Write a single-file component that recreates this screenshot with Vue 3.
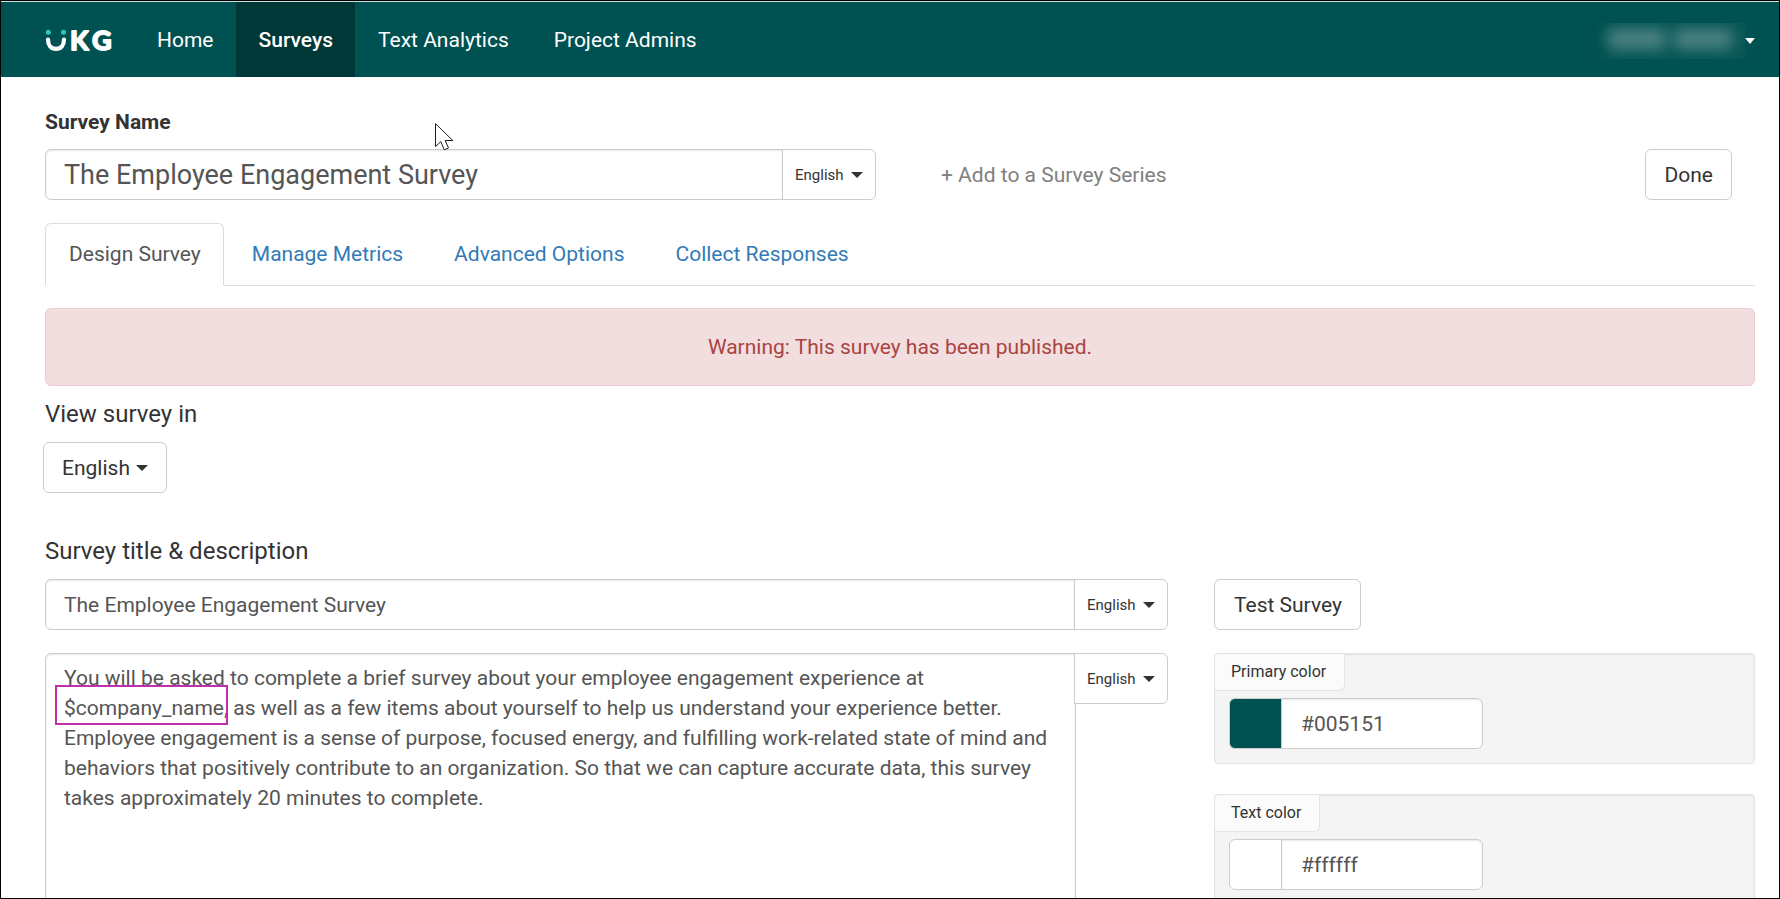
<script setup>
import { ref } from 'vue'

const navItems = [
  { label: 'Home', active: false },
  { label: 'Surveys', active: true },
  { label: 'Text Analytics', active: false },
  { label: 'Project Admins', active: false },
]

const tabs = [
  { label: 'Design Survey', active: true },
  { label: 'Manage Metrics', active: false },
  { label: 'Advanced Options', active: false },
  { label: 'Collect Responses', active: false },
]

const surveyName = ref('The Employee Engagement Survey')
const surveyTitle = ref('The Employee Engagement Survey')
const description = ref(
  'You will be asked to complete a brief survey about your employee engagement experience at $company_name, as well as a few items about yourself to help us understand your experience better. Employee engagement is a sense of purpose, focused energy, and fulfilling work-related state of mind and behaviors that positively contribute to an organization. So that we can capture accurate data, this survey takes approximately 20 minutes to complete.'
)

const colors = ref([
  { id: 'primary-color', label: 'Primary color', value: '#005151' },
  { id: 'text-color', label: 'Text color', value: '#ffffff' },
])
</script>

<template>
  <div class="frame">
    <header class="navbar">
      <a class="brand" href="#" aria-label="UKG">
        <svg width="72" height="44" viewBox="0 -10 72 44" aria-hidden="true">
          <circle cx="3.3" cy="3.3" r="2.5" fill="#2fc9b4" />
          <circle cx="18.5" cy="3.3" r="2.5" fill="#2fc9b4" />
          <path d="M3 10.5C3 16.5 6 19.9 11 19.9S19 16.5 19 10.5" fill="none" stroke="#fff" stroke-width="4.2" stroke-linecap="round" />
          <text x="25" y="21" class="brand-text">K</text>
          <text x="47" y="21" class="brand-text">G</text>
        </svg>
      </a>
      <nav class="nav">
        <a v-for="item in navItems" :key="item.label" href="#" class="nav-link" :class="{ active: item.active }">{{ item.label }}</a>
      </nav>
      <button class="user" type="button" aria-label="Account menu">
        <span class="user-name"><i class="smudge"></i><i class="smudge"></i></span>
        <span class="caret"></span>
      </button>
    </header>

    <main class="content">
      <label class="name-label" for="survey-name">Survey Name</label>
      <div class="name-row">
        <div class="group">
          <input id="survey-name" v-model="surveyName" class="field field-large" type="text" />
          <span class="select addon">
            <select aria-label="Survey name language"><option>English</option></select>
            <span class="caret"></span>
          </span>
        </div>
        <div class="name-actions">
          <a class="series-link" href="#">+ Add to a Survey Series</a>
          <button class="btn" type="button">Done</button>
        </div>
      </div>

      <nav class="tabs">
        <a v-for="tab in tabs" :key="tab.label" href="#" class="tab" :class="{ active: tab.active }">{{ tab.label }}</a>
      </nav>

      <div class="alert" role="alert">Warning: This survey has been published.</div>

      <label class="heading" for="view-language">View survey in</label>
      <span class="select view-select">
        <select id="view-language"><option>English</option></select>
        <span class="caret"></span>
      </span>

      <h2 class="heading title-heading">Survey title &amp; description</h2>
      <div class="columns">
        <section class="column">
          <div class="group">
            <input v-model="surveyTitle" class="field" type="text" aria-label="Survey title" />
            <span class="select addon">
              <select aria-label="Survey title language"><option>English</option></select>
              <span class="caret"></span>
            </span>
          </div>
          <div class="group description">
            <textarea v-model="description" class="field area" aria-label="Survey description" spellcheck="false"></textarea>
            <span class="select addon area-addon">
              <select aria-label="Survey description language"><option>English</option></select>
              <span class="caret"></span>
            </span>
            <span class="marker"></span>
          </div>
        </section>

        <aside class="column">
          <button class="btn" type="button">Test Survey</button>
          <div class="wells">
            <div v-for="color in colors" :key="color.id" class="well">
              <label class="well-label" :for="color.id">{{ color.label }}</label>
              <div class="color-group">
                <span class="swatch" :style="{ backgroundColor: color.value }"></span>
                <input :id="color.id" v-model="color.value" class="field color-field" type="text" />
              </div>
            </div>
          </div>
        </aside>
      </div>
    </main>

    <svg class="pointer" width="20" height="29" viewBox="0 0 20 29" aria-hidden="true">
      <path d="M.5 .7V23.5L5.8 18.6L9.3 26.8L13.5 25L10.2 17.5H17.8Z" fill="#fff" stroke="#1b1b28" stroke-width="1" />
    </svg>
  </div>
</template>

<style>
body {
  margin: 0;
}
</style>

<style scoped>
.frame,
.frame * {
  box-sizing: border-box;
}

.frame {
  position: relative;
  height: 100vh;
  overflow: hidden;
  border: 1px solid #000;
  background: #fff;
  color: #333;
  font-family: Roboto, "Liberation Sans", sans-serif;
  font-size: 21px;
  line-height: 30px;
}

.frame a {
  text-decoration: none;
}

.navbar {
  display: flex;
  align-items: stretch;
  height: 76px;
  padding: 0 24px 0 44px;
  border-top: 1px solid #d5dcdc;
  background: #005151;
}

.brand {
  display: flex;
  align-items: center;
  margin-right: 17px;
  padding-top: 3px;
}

.brand-text {
  fill: #fff;
  stroke: #fff;
  stroke-width: 1.8;
  stroke-linejoin: round;
  font: 700 27px Lato, sans-serif;
}

.nav {
  display: flex;
}

.nav-link {
  display: flex;
  align-items: center;
  padding: 0 22px 0 23px;
  color: #fff;
}

.nav-link.active {
  background: #003838;
  font-weight: 500;
}

.user {
  display: flex;
  align-items: center;
  margin-left: auto;
  padding: 3px 0 0;
  border: 0;
  background: none;
  color: #fff;
}

.user-name {
  display: flex;
  gap: 6px;
  height: 36px;
  padding: 6px 12px 10px 10px;
  overflow: hidden;
  background: linear-gradient(90deg, #005151, #075757 20px);
}

.smudge {
  width: 60px;
  border-radius: 8px;
  background: #4c8281;
  filter: blur(7px);
}

.caret {
  width: 0;
  height: 0;
  border: solid transparent;
  border-width: 6px 6px 0;
  border-top-color: currentColor;
}

.user .caret {
  border-width: 6px 5px 0;
}

.content {
  padding: 30px 24px 0 44px;
}

.name-label {
  display: block;
  margin-bottom: 12px;
  font-size: 21px;
  font-weight: 700;
}

.name-row {
  display: grid;
  grid-template-columns: 831fr 879fr;
}

.group {
  position: relative;
  display: flex;
  align-items: flex-start;
}

.field {
  flex: 1;
  min-width: 0;
  height: 51px;
  margin: 0;
  padding: 9px 18px;
  border: 1px solid #ccc;
  border-radius: 6px 0 0 6px;
  outline: 0;
  background: #fff;
  box-shadow: inset 0 1px 2px rgba(0, 0, 0, 0.1);
  color: #555;
  font: inherit;
}

.field-large {
  font-size: 27px;
}

.select {
  position: relative;
  display: inline-block;
}

.select select {
  width: 100%;
  height: 51px;
  margin: 0;
  padding: 0 18px;
  appearance: none;
  border: 1px solid #ccc;
  border-radius: 6px;
  background: #fff;
  color: #333;
  font: inherit;
}

.select .caret {
  position: absolute;
  top: 23px;
  right: 19px;
  pointer-events: none;
}

.addon {
  width: 94px;
  margin-left: -1px;
}

.area-addon {
  margin-left: -2px;
}

.addon select {
  padding: 0 12px;
  border-radius: 0 6px 6px 0;
  font-size: 15px;
}

.addon .caret {
  right: 13px;
}

.name-actions {
  display: flex;
  align-items: center;
  justify-content: space-between;
  padding: 0 23px 0 65px;
}

.series-link {
  color: #808080;
}

.btn {
  height: 51px;
  padding: 0 18px 0 19px;
  border: 1px solid #ccc;
  border-radius: 6px;
  background: #fff;
  color: #333;
  font: inherit;
}

.tabs {
  display: flex;
  gap: 4px;
  margin-top: 23px;
  border-bottom: 1px solid #ddd;
}

.tab {
  height: 63px;
  margin-bottom: -1px;
  padding: 15px 22px 0 23px;
  border: 1px solid transparent;
  border-radius: 6px 6px 0 0;
  color: #337ab7;
}

.tab.active {
  border-color: #ddd;
  border-bottom-color: #fff;
  background: #fff;
  color: #555;
}

.alert {
  margin: 22px 0 13px;
  padding: 23px;
  border: 1px solid #ebccd1;
  border-radius: 6px;
  background: #f2dede;
  color: #a94442;
  text-align: center;
}

.heading {
  display: block;
  margin: 0;
  font-size: 24px;
  font-weight: 400;
}

.view-select {
  display: block;
  width: 124px;
  margin: 13px 0 0 -2px;
}

.title-heading {
  margin: 43px 0 13px;
}

.columns {
  display: grid;
  grid-template-columns: 1123fr 541fr;
  gap: 46px;
}

.description {
  margin-top: 23px;
}

.area {
  height: 400px;
  border-radius: 6px 0 0 6px;
  resize: none;
  overflow: hidden;
}

.marker {
  position: absolute;
  top: 32px;
  left: 10px;
  width: 173px;
  height: 40px;
  border: 2px solid #c12fae;
  pointer-events: none;
}

.wells {
  display: grid;
  gap: 30px;
  margin-top: 23px;
}

.well {
  padding-bottom: 14px;
  border: 1px solid #e3e3e3;
  border-radius: 4px;
  background: #f4f4f4;
  box-shadow: inset 0 1px 2px rgba(0, 0, 0, 0.07);
}

.well-label {
  display: block;
  width: fit-content;
  height: 37px;
  padding: 3px 18px 3px 16px;
  border: solid #e3e3e3;
  border-width: 0 1px 1px 0;
  border-radius: 4px 0 6px 0;
  background: #fbfbfb;
  font-size: 16px;
}

.color-group {
  display: flex;
  width: 254px;
  margin: 7px 0 0 14px;
}

.swatch {
  width: 53px;
  border: 1px solid #ccc;
  border-radius: 6px 0 0 6px;
}

.color-field {
  margin-left: -1px;
  padding: 0 19px;
  border-radius: 0 6px 6px 0;
}

.pointer {
  position: absolute;
  top: 122px;
  left: 434px;
  pointer-events: none;
}
</style>
